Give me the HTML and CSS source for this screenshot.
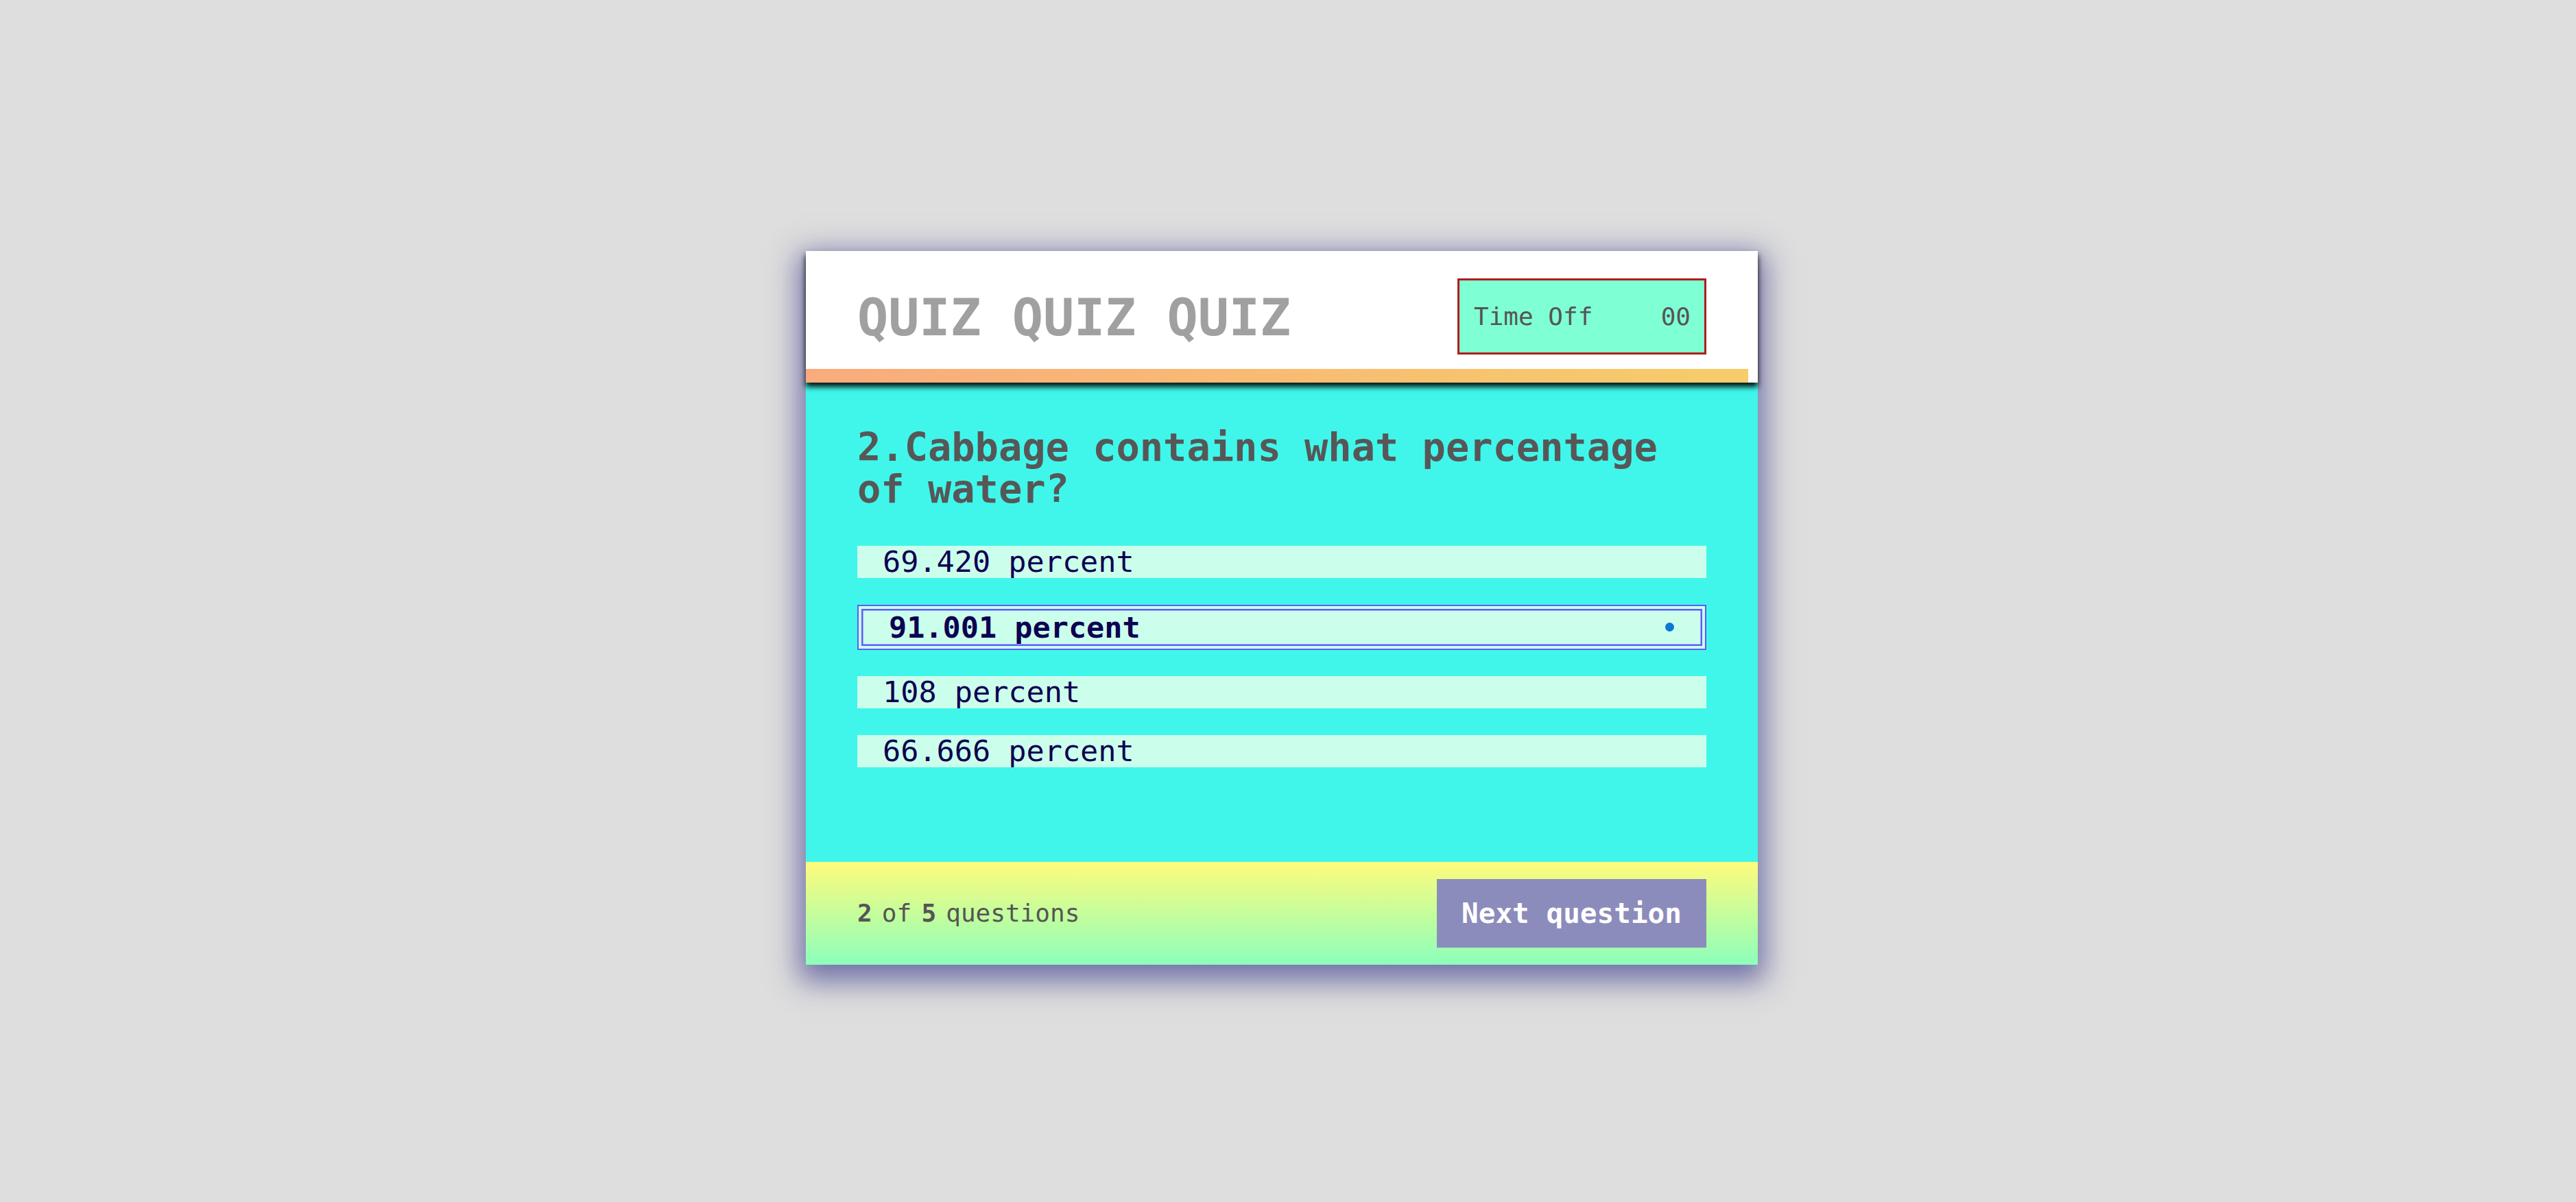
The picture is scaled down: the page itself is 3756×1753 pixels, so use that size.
FILE: index.html
```html
<!DOCTYPE html>
<html lang="en">
<head>
<meta charset="utf-8">
<title>Quiz</title>
<link rel="stylesheet" href="styles.css">
</head>
<body>
<main class="page">
  <div class="card">
    <header class="head">
      <div class="head-row">
        <h1 class="title">QUIZ QUIZ QUIZ</h1>
        <div class="timer"><span class="timer-label">Time Off</span><span class="timer-value">00</span></div>
      </div>
      <div class="progress"></div>
    </header>
    <section class="body">
      <h2 class="question">2.Cabbage contains what percentage of water?</h2>
      <ul class="options">
        <li class="option">69.420 percent</li>
        <li class="option selected"><span class="opt-text">91.001 percent</span><span class="dot"></span></li>
        <li class="option">108 percent</li>
        <li class="option">66.666 percent</li>
      </ul>
    </section>
    <footer class="foot">
      <p class="count"><b>2</b> of <b>5</b> questions</p>
      <button class="next">Next question</button>
    </footer>
  </div>
</main>
</body>
</html>
```

FILE: styles.css
```css
html, body {
  margin: 0;
  padding: 0;
  background: #dedede;
}
body {
  font-family: "DejaVu Sans Mono", "Liberation Mono", monospace;
}
.page {
  display: flex;
  justify-content: center;
  padding: 366px 18px 0 0;
  min-height: 1753px;
  box-sizing: border-box;
}
.card {
  width: 1388px;
  display: flex;
  flex-direction: column;
  align-self: flex-start;
  box-shadow: 0 14px 40px 10px rgba(60, 60, 140, 0.68);
}
.head {
  background: #ffffff;
  position: relative;
  z-index: 1;
  box-shadow: 0 6px 8px rgba(0, 0, 0, 0.95);
}
.head-row {
  display: flex;
  align-items: center;
  justify-content: space-between;
  padding: 40px 75px 21px 75px;
}
.title {
  margin: 0;
  font-size: 75px;
  line-height: 111px;
  font-weight: bold;
  color: #a0a0a0;
  position: relative;
  top: 2px;
}
.timer {
  width: 363px;
  height: 111px;
  box-sizing: border-box;
  border: 3px solid #b01c1c;
  background: #7fffd4;
  display: flex;
  align-items: center;
  justify-content: space-between;
  padding: 0 20px 0 21px;
  font-size: 36px;
  color: #555555;
}
.progress {
  height: 20px;
  width: 99%;
  background: linear-gradient(90deg, #f9ab7c, #f6cd6a);
}
.body {
  background: #40f6ea;
  padding: 64px 75px 138px 75px;
}
.question {
  margin: 0 0 52px 0;
  font-size: 57px;
  line-height: 61px;
  font-weight: bold;
  color: #575757;
}
.options {
  list-style: none;
  margin: 0;
  padding: 0;
  display: flex;
  flex-direction: column;
  gap: 38.5px;
}
.option {
  background: #ccffeb;
  height: 47px;
  line-height: 47px;
  font-size: 43.5px;
  color: #0d0052;
  padding: 0 36px 0 37px;
  white-space: nowrap;
}
.option.selected {
  height: 66px;
  box-sizing: border-box;
  line-height: 62px;
  border: 2px solid #5c5cff;
  box-shadow: inset 0 0 0 4px #ccffeb, inset 0 0 0 6.5px #5c5cff;
  padding: 0 45px 0 44px;
  font-weight: bold;
  display: flex;
  align-items: center;
  justify-content: space-between;
}
.dot {
  width: 13px;
  height: 13px;
  border-radius: 50%;
  background: #0a78d8;
}
.foot {
  background: linear-gradient(180deg, #fffb7c, #8cffbb);
  display: flex;
  align-items: center;
  justify-content: space-between;
  padding: 25px 75px;
}
.count {
  margin: 0;
  font-size: 36px;
  word-spacing: -7.5px;
  color: #555555;
}
.count b {
  font-weight: bold;
}
.next {
  width: 393px;
  height: 100px;
  border: none;
  background: #8c8cbc;
  color: #ffffff;
  font-family: "DejaVu Sans Mono", "Liberation Mono", monospace;
  font-size: 41px;
  font-weight: bold;
  padding: 0;
}
```
